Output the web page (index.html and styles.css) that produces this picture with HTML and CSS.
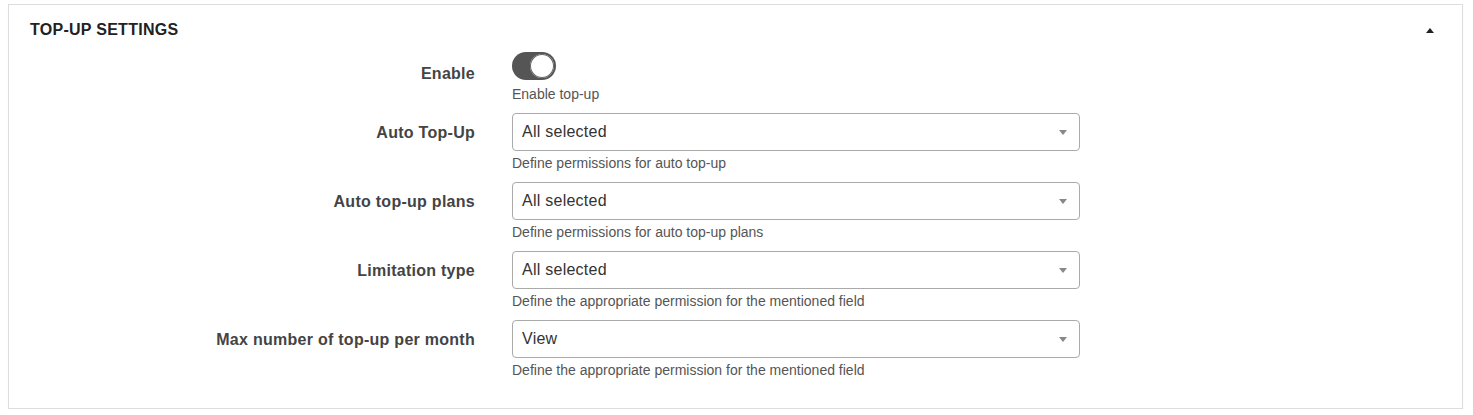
FILE: index.html
```html
<!DOCTYPE html>
<html>
<head>
<meta charset="utf-8">
<link rel="stylesheet" href="styles.css">
</head>
<body>
<div class="panel">
  <div class="panel-header">
    <span class="panel-title">TOP-UP SETTINGS</span>
    <span class="collapse-arrow"></span>
  </div>
  <div class="form">
    <div class="row row-toggle">
      <label class="label">Enable</label>
      <div class="control">
        <div class="toggle"><span class="knob"></span></div>
        <div class="help help-toggle">Enable top-up</div>
      </div>
    </div>
    <div class="row">
      <label class="label">Auto Top-Up</label>
      <div class="control">
        <div class="select">All selected<span class="caret"></span></div>
        <div class="help">Define permissions for auto top-up</div>
      </div>
    </div>
    <div class="row">
      <label class="label">Auto top-up plans</label>
      <div class="control">
        <div class="select">All selected<span class="caret"></span></div>
        <div class="help">Define permissions for auto top-up plans</div>
      </div>
    </div>
    <div class="row">
      <label class="label">Limitation type</label>
      <div class="control">
        <div class="select">All selected<span class="caret"></span></div>
        <div class="help">Define the appropriate permission for the mentioned field</div>
      </div>
    </div>
    <div class="row">
      <label class="label">Max number of top-up per month</label>
      <div class="control">
        <div class="select">View<span class="caret"></span></div>
        <div class="help">Define the appropriate permission for the mentioned field</div>
      </div>
    </div>
  </div>
</div>
</body>
</html>
```

FILE: styles.css
```css
html, body {
  margin: 0;
  padding: 0;
  background: #ffffff;
  font-family: "Liberation Sans", Arial, sans-serif;
}

.panel {
  margin: 4px 10px 0 8px;
  border: 1px solid #dddddd;
  box-shadow: 0 1px 1px rgba(0, 0, 0, 0.05);
  background: #fff;
  padding-bottom: 19px;
}

.panel-header {
  display: flex;
  align-items: center;
  justify-content: space-between;
  padding: 15px 28px 0 21px;
  height: 20px;
}

.panel-title {
  font-size: 16px;
  font-weight: bold;
  line-height: 20px;
  letter-spacing: 0.27px;
  color: #222;
}

.collapse-arrow {
  width: 0;
  height: 0;
  border-left: 4px solid transparent;
  border-right: 4px solid transparent;
  border-bottom: 5px solid #222;
  margin-top: 1px;
}

.form {
  padding-top: 12px;
}

.row {
  display: grid;
  grid-template-columns: 466px 568px;
  column-gap: 37px;
  margin-bottom: 9px;
}

.row-toggle {
  margin-bottom: 9px;
}

.label {
  text-align: right;
  font-size: 16px;
  font-weight: bold;
  line-height: 20px;
  letter-spacing: 0.27px;
  color: #444;
  padding-top: 10px;
}

.row-toggle .label {
  padding-top: 12px;
}

.control {
  display: flex;
  flex-direction: column;
}

.toggle {
  position: relative;
  width: 44px;
  height: 28px;
  border-radius: 14px;
  background: #555555;
}

.knob {
  position: absolute;
  top: 2px;
  right: 2px;
  width: 24px;
  height: 24px;
  border-radius: 50%;
  background: #fff;
  box-shadow: 0 0 0 1px #666 inset;
}

.select {
  position: relative;
  height: 36px;
  border: 1px solid #aaaaaa;
  border-radius: 4px;
  padding: 0 30px 0 9px;
  font-size: 16px;
  line-height: 36px;
  letter-spacing: 0.25px;
  color: #333;
}

.caret {
  position: absolute;
  right: 12px;
  top: 16px;
  width: 0;
  height: 0;
  border-left: 4px solid transparent;
  border-right: 4px solid transparent;
  border-top: 5px solid #888;
}

.help {
  margin-top: 2px;
  font-size: 14px;
  line-height: 20px;
  color: #555;
}

.help-toggle {
  margin-top: 4px;
}
```
